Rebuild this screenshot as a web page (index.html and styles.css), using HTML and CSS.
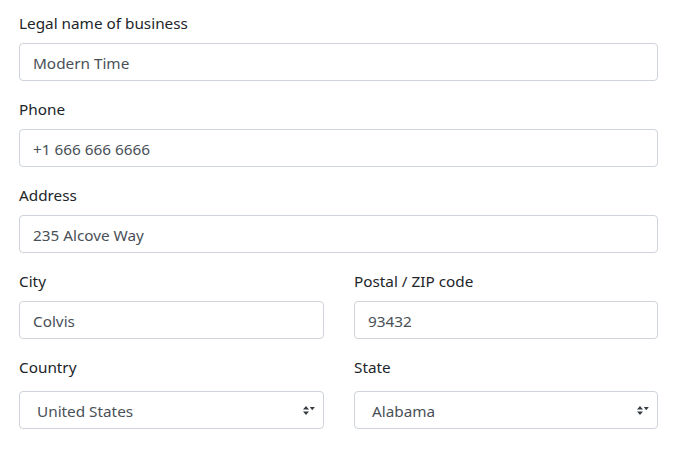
FILE: index.html
```html
<!DOCTYPE html>
<html>
<head>
<meta charset="utf-8">
<link rel="stylesheet" href="styles.css">
</head>
<body>
<form class="form">
  <div class="group">
    <label class="label">Legal name of business</label>
    <div class="input">Modern Time</div>
  </div>
  <div class="group">
    <label class="label">Phone</label>
    <div class="input">+1 666 666 6666</div>
  </div>
  <div class="group">
    <label class="label">Address</label>
    <div class="input">235 Alcove Way</div>
  </div>
  <div class="row">
    <div class="group">
      <label class="label">City</label>
      <div class="input">Colvis</div>
    </div>
    <div class="group">
      <label class="label">Postal / ZIP code</label>
      <div class="input">93432</div>
    </div>
  </div>
  <div class="row">
    <div class="group">
      <label class="label">Country</label>
      <div class="select">United States
        <svg class="arrows" width="12" height="9" viewBox="0 0 12 9"><path fill="#343a40" d="M3 0L0 3.6h6zM3 9L0 5.4h6z"/><path fill="#343a40" d="M6.8 1h5L9.3 4.2z"/></svg>
      </div>
    </div>
    <div class="group">
      <label class="label">State</label>
      <div class="select">Alabama
        <svg class="arrows" width="12" height="9" viewBox="0 0 12 9"><path fill="#343a40" d="M3 0L0 3.6h6zM3 9L0 5.4h6z"/><path fill="#343a40" d="M6.8 1h5L9.3 4.2z"/></svg>
      </div>
    </div>
  </div>
</form>
</body>
</html>
```
FILE: styles.css
```css
html, body {
  margin: 0;
  padding: 0;
  background: #fff;
}
body {
  font-family: "Noto Sans", "Segoe UI", sans-serif;
  font-size: 15.3px;
  color: #212529;
}
.form {
  padding: 11px 16px 0 19px;
  width: 639px;
}
.group {
  display: flex;
  flex-direction: column;
  margin-bottom: 16px;
}
.label {
  line-height: 24px;
  margin-bottom: 8px;
}
.input, .select {
  box-sizing: border-box;
  height: 38px;
  border: 1px solid #ced4da;
  border-radius: 4px;
  padding: 1px 13px 0;
  line-height: 36px;
  color: #495057;
}
.select {
  position: relative;
  margin-top: 4px;
  padding-left: 17px;
}
.arrows {
  position: absolute;
  right: 8px;
  top: 14px;
}
.row {
  display: grid;
  grid-template-columns: 305px 304px;
  column-gap: 30px;
}
```
